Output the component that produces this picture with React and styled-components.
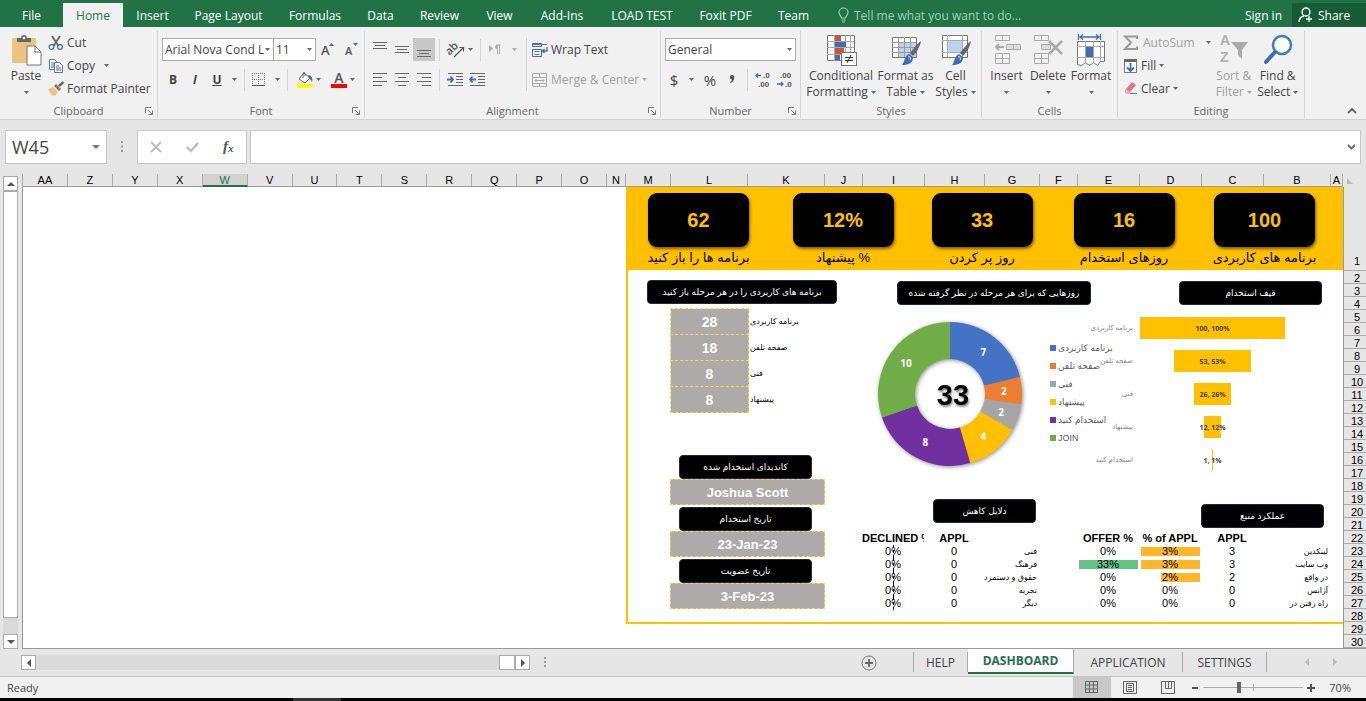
import React from "react";
import styled, { createGlobalStyle, css } from "styled-components";

const ui = `"Open Sans", "Noto Sans", sans-serif`;
const sheet = `"Liberation Sans", "DejaVu Sans", sans-serif`;
const amber = "#ffc000";

const GlobalStyle = createGlobalStyle`
  * {
    box-sizing: border-box;
  }
  body {
    margin: 0;
    font-family: ${ui};
    font-size: 12px;
    color: #444;
    background: #e6e6e6;
  }
  button, select, input {
    font: inherit;
    color: inherit;
    margin: 0;
    padding: 0;
    border: 0;
    background: none;
    border-radius: 0;
    outline: 0;
  }
  svg {
    display: block;
    flex: none;
    overflow: visible;
  }
`;

const Page = styled.div`
  min-height: 100vh;
  display: flex;
  flex-direction: column;
  overflow: hidden;
`;

/* ---------- tab bar ---------- */

const TabBar = styled.nav`
  height: 27px;
  flex: none;
  display: flex;
  padding-top: 3px;
  background: #217346;
  color: #fff;
  white-space: nowrap;
`;
const RibbonTab = styled.button`
  width: ${(p) => p.$width}px;
  height: 24px;
  text-align: center;
  ${(p) =>
    p.$active &&
    css`
      background: #f1f1f1;
      color: #217346;
    `}
`;
const TellMe = styled.label`
  display: flex;
  align-items: center;
  gap: 5px;
  flex: 1;
  padding-left: 16px;
  color: #a5cdb6;
  input {
    width: 180px;
  }
  input::placeholder {
    color: #a5cdb6;
    opacity: 1;
  }
`;
const ShareButton = styled.button`
  width: 74px;
  height: 24px;
  display: flex;
  align-items: center;
  gap: 4px;
  padding-left: 6px;
  background: #185c37;
`;

/* ---------- ribbon ---------- */

const RibbonBar = styled.div`
  height: 93px;
  flex: none;
  display: flex;
  padding: 4px 0 1px;
  background: #f1f1f1;
  border-bottom: 1px solid #d2d2d2;
  white-space: nowrap;
`;
const Group = styled.section`
  width: ${(p) => p.$width}px;
  display: flex;
  flex-direction: column;
  border-right: 1px solid #d4d4d4;
`;
const GroupBody = styled.div`
  display: flex;
  flex: 1;
  padding: 0 4px;
`;
const GroupFooter = styled.div`
  height: 14px;
  display: grid;
  grid-template-columns: 12px 1fr 12px;
  align-items: center;
  text-align: center;
  color: #666;
  font-size: 11px;
  line-height: 14px;
`;
const BigButton = styled.button`
  width: ${(p) => p.$width}px;
  height: 70px;
  display: flex;
  flex-direction: column;
  align-items: center;
  padding-top: 3px;
  color: ${(p) => (p.$off ? "#a0a0a0" : "#444")};
  line-height: 16px;
  svg {
    margin-bottom: 2px;
  }
`;
const LabelLine = styled.span`
  height: 16px;
  display: flex;
  align-items: center;
  gap: 3px;
  svg {
    margin: 0;
  }
`;
const Stack = styled.div`
  display: flex;
  flex-direction: column;
`;
const SmallButton = styled.button`
  height: 23px;
  display: flex;
  align-items: center;
  gap: ${(p) => p.$gap || 3}px;
  color: ${(p) => (p.$off ? "#a0a0a0" : "#444")};
`;
const ToolRows = styled.div`
  display: flex;
  flex-direction: column;
  gap: 7px;
  padding-top: 7px;
`;
const ToolRow = styled.div`
  height: 23px;
  display: flex;
  align-items: center;
`;
const Tool = styled.button`
  width: ${(p) => p.$width || 22}px;
  height: 23px;
  display: flex;
  align-items: center;
  justify-content: center;
  gap: 3px;
  font-weight: ${(p) => (p.$bold ? 700 : 400)};
  font-size: ${(p) => p.$size || 12}px;
  background: ${(p) => (p.$active ? "#c8c8c8" : "none")};
`;
const Divider = styled.span`
  width: 1px;
  height: ${(p) => p.$height || 22}px;
  margin: 0 ${(p) => (p.$gap === undefined ? 4 : p.$gap)}px;
  background: #d4d4d4;
`;
const SelectFrame = styled.div`
  width: ${(p) => p.$width}px;
  height: 23px;
  display: grid;
  align-items: center;
  border: 1px solid #ababab;
  margin-right: -1px;
  background: #fff;
  select {
    grid-area: 1 / 1;
    width: 100%;
    padding: 0 6px 0 2px;
    appearance: none;
  }
  svg {
    grid-area: 1 / 1;
    justify-self: end;
    margin-right: 3px;
    pointer-events: none;
  }
`;
const RibbonEnd = styled.div`
  flex: 1;
  display: flex;
  align-items: flex-end;
  justify-content: flex-end;
  padding: 0 9px 3px 0;
`;

/* ---------- formula bar ---------- */

const FormulaRow = styled.div`
  height: 54px;
  flex: none;
  display: flex;
  align-items: center;
  padding: 0 5px;
`;
const Box = styled.div`
  height: 34px;
  display: flex;
  align-items: center;
  background: #fff;
  border: 1px solid #c6c6c6;
`;
const NameBox = styled(Box)`
  width: 102px;
  padding: 0 6px;
  input {
    width: 80px;
    font-size: 18px;
  }
`;
const FormulaTools = styled(Box)`
  width: 110px;
  justify-content: space-around;
  margin-right: 3px;
  button {
    width: 28px;
    display: flex;
    justify-content: center;
  }
`;
const FormulaBox = styled(Box)`
  flex: 1;
  padding-right: 4px;
  input {
    flex: 1;
    height: 30px;
    padding: 0 6px;
  }
`;
const Grip = styled.span`
  width: 30px;
  display: flex;
  justify-content: center;
`;

/* ---------- worksheet ---------- */

const Workbook = styled.main`
  flex: 1;
  display: grid;
  grid-template-columns: 22px 1fr;
`;
const VScroll = styled.div`
  display: flex;
  flex-direction: column;
  padding: 2px 4px 0 3px;
`;
const ScrollButton = styled.button`
  width: 15px;
  height: 15px;
  flex: none;
  display: flex;
  align-items: center;
  justify-content: center;
  background: #fff;
  border: 1px solid #ababab;
`;
const VThumb = styled.div`
  flex: 1;
  background: #fff;
  border: 1px solid #ababab;
`;
const VTrack = styled.div`
  height: 16px;
  background: #dadada;
`;
const Sheet = styled.div`
  display: flex;
  flex-direction: column;
`;
const ColumnHeads = styled.div`
  height: 13px;
  display: flex;
  font: 11px/13px ${sheet};
  color: #000;
  text-align: center;
  border-left: 1px solid #ababab;
`;
const ColumnHead = styled.div`
  ${(p) => (p.$width ? `width: ${p.$width}px; flex: none;` : "flex: 1;")}
  border-right: 1px solid #ababab;
  border-bottom: 1px solid #999;
  ${(p) =>
    p.$active &&
    css`
      background: #d2d2d2;
      color: #217346;
      border-bottom: 2px solid #217346;
    `}
`;
const Corner = styled.div`
  width: 23px;
  padding: 4px 0 0 4px;
`;
const SheetBody = styled.div`
  flex: 1;
  display: flex;
  background: #fff;
  border-left: 1px solid #999;
  border-bottom: 1px solid #999;
`;
const EmptyCells = styled.div`
  flex: 1;
`;
const RowHeads = styled.div`
  width: 23px;
  display: flex;
  flex-direction: column;
  background: #e6e6e6;
  border-left: 1px solid #999;
  font: 11px/10px ${sheet};
  color: #000;
`;
const RowHead = styled.div`
  ${(p) => (p.$tall ? "height: 84px; padding-bottom: 4px;" : "flex: 1;")}
  display: flex;
  align-items: flex-end;
  justify-content: center;
  padding-left: 4px;
  border-bottom: 1px solid #ababab;
`;

/* ---------- dashboard ---------- */

const Dashboard = styled.div`
  width: 717px;
  flex: none;
  color: #000;
  font-family: ${sheet};
`;
const KpiBand = styled.div`
  height: 83px;
  display: grid;
  grid-template-columns: 145px 144px 134px 150px 131px;
  justify-items: center;
  padding-top: 6px;
  background: ${amber};
`;
const Kpi = styled.div`
  display: flex;
  flex-direction: column;
  align-items: center;
  white-space: nowrap;
`;
const KpiValue = styled.div`
  width: 101px;
  height: 54px;
  display: flex;
  align-items: center;
  justify-content: center;
  border-radius: 9px;
  background: #000;
  color: ${amber};
  font-size: 20px;
  font-weight: 700;
  box-shadow: 1px 2px 3px rgba(0, 0, 0, 0.5);
`;
const KpiLabel = styled.div`
  height: 22px;
  font-size: 13px;
  line-height: 22px;
`;
const Board = styled.div`
  height: 354px;
  display: grid;
  grid-template-columns: 234px 1fr;
  border-left: 2px solid ${amber};
  border-bottom: 2px solid ${amber};
`;
const StageColumn = styled.div`
  padding: 10px 0 0 19px;
`;
const MainColumn = styled.div`
  display: grid;
  grid-template-rows: 229px 1fr;
`;
const ChartRow = styled.div`
  display: grid;
  grid-template-columns: 250px 1fr;
  padding-top: 11px;
`;
const TableRow = styled.div`
  display: grid;
  grid-template-columns: 215px 1fr;
`;
const Title = styled.h2`
  width: ${(p) => p.$width}px;
  height: 24px;
  margin: ${(p) => p.$top || 0}px 0 0 ${(p) => p.$left || 0}px;
  display: flex;
  align-items: center;
  justify-content: center;
  border: 1px solid #1b2a41;
  border-radius: 4px;
  background: #000;
  color: #fff;
  font-size: 9px;
  font-weight: 400;
  white-space: nowrap;
`;
const StageTable = styled.table`
  margin: 4px 0 42px 23px;
  border-collapse: collapse;
  td {
    width: 78px;
    height: 26px;
    padding: 0;
    text-align: center;
    border: 1px dashed #ffd54a;
    background: #aeaaaa;
    color: #fff;
    font-size: 14px;
    font-weight: 700;
  }
  th {
    padding: 0 1px;
    font-size: 8px;
    font-weight: 400;
    text-align: left;
    white-space: nowrap;
  }
`;
const Hire = styled.div`
  padding-left: 23px;
  margin-bottom: 2px;
`;
const HireValue = styled.div`
  width: 155px;
  height: 26px;
  display: flex;
  align-items: center;
  justify-content: center;
  border: 1px dashed #ffd54a;
  background: #aeaaaa;
  color: #fff;
  font-size: 13px;
  font-weight: 700;
`;
const DonutArea = styled.div`
  display: flex;
  padding: 9px 0 0 8px;
`;
const Legend = styled.ul`
  list-style: none;
  margin: 25px 0 0 20px;
  padding: 0;
`;
const LegendItem = styled.li`
  height: 18px;
  display: flex;
  align-items: center;
  gap: 2px;
  font-size: 9px;
  color: #595959;
  white-space: nowrap;
  &::before {
    content: "";
    width: 6px;
    height: 6px;
    background: ${(p) => p.$color};
  }
`;
const Funnel = styled.div`
  display: flex;
  flex-direction: column;
  gap: 11px;
  padding-top: 12px;
`;
const FunnelRow = styled.div`
  height: 22px;
  display: grid;
  grid-template-columns: 21px 145px;
  gap: 7px;
  align-items: center;
  justify-items: center;
`;
const FunnelLabel = styled.span`
  justify-self: stretch;
  display: flex;
  justify-content: flex-end;
  font-size: 7px;
  color: #7f7f7f;
  white-space: nowrap;
`;
const FunnelBar = styled.div`
  height: 22px;
  display: flex;
  align-items: center;
  justify-content: center;
  background: ${amber};
  color: #404040;
  font: 700 7px ${ui};
  white-space: nowrap;
`;
const DataTable = styled.table`
  table-layout: fixed;
  width: ${(p) => p.$width}px;
  margin-top: ${(p) => p.$top}px;
  border-collapse: collapse;
  font-size: 11px;
  line-height: 13px;
  th,
  td {
    height: 13px;
    padding: 0;
    text-align: center;
    white-space: nowrap;
    overflow: hidden;
  }
  thead th {
    height: 14px;
  }
  tbody th {
    padding-right: 2px;
    text-align: right;
    font-size: 8px;
    font-weight: 400;
  }
`;
const BarCell = styled.td`
  background: linear-gradient(${(p) => p.$color}, ${(p) => p.$color}) right 1px
    center / ${(p) => p.$bar}px 9px no-repeat;
`;
const AxisCell = styled.td`
  background: repeating-linear-gradient(#000 0 3px, transparent 3px 5px) center /
    1px 100% no-repeat;
`;

/* ---------- bottom ---------- */

const TabStrip = styled.div`
  height: 28px;
  flex: none;
  display: flex;
  padding-left: 21px;
  border-bottom: 1px solid #c6c6c6;
`;
const HScroll = styled.div`
  height: 15px;
  flex: 1;
  display: flex;
  margin-top: 6px;
  background: #dadada;
  justify-content: space-between;
`;
const HEnd = styled.div`
  display: flex;
`;
const HThumb = styled.div`
  width: 16px;
  background: #fff;
  border: 1px solid #ababab;
`;
const SheetTabs = styled.div`
  width: 836px;
  display: flex;
  align-items: flex-start;
`;
const AddSheet = styled.button`
  width: 88px;
  height: 27px;
  margin-left: 265px;
  display: flex;
  align-items: center;
  justify-content: center;
`;
const SheetTab = styled.button`
  width: ${(p) => p.$width}px;
  height: ${(p) => (p.$active ? 25 : 20)}px;
  margin-top: ${(p) => (p.$active ? 0 : 3)}px;
  border-right: 1px solid #ababab;
  &:first-of-type + & {
    border-left: 1px solid #ababab;
  }
  ${(p) => p.$first && "border-left: 1px solid #ababab;"}
  ${(p) =>
    p.$active &&
    css`
      background: #fff;
      color: #217346;
      font-weight: 700;
      border-bottom: 2px solid #217346;
    `}
`;
const TabArrows = styled.div`
  flex: 1;
  height: 26px;
  display: flex;
  align-items: center;
  justify-content: flex-end;
  gap: 20px;
  padding-right: 27px;
`;
const StatusBar = styled.footer`
  height: 21px;
  flex: none;
  display: flex;
  align-items: center;
  padding: 0 15px 0 7px;
  background: #f1f1f1;
`;
const Ready = styled.span`
  flex: 1;
  font-size: 11px;
`;
const ViewButton = styled.button`
  width: 38px;
  height: 21px;
  display: flex;
  align-items: center;
  justify-content: center;
  background: ${(p) => (p.$active ? "#c8c8c8" : "none")};
`;
const ZoomButton = styled.button`
  width: 16px;
  height: 20px;
  display: flex;
  align-items: center;
  justify-content: center;
`;
const ZoomSlider = styled.input`
  width: 100px;
  height: 11px;
  appearance: none;
  background: linear-gradient(#ababab, #ababab) center / 100% 1px no-repeat,
    linear-gradient(#ababab, #ababab) center / 1px 7px no-repeat;
  &::-webkit-slider-thumb {
    appearance: none;
    width: 4px;
    height: 11px;
    background: #666;
  }
`;
const ZoomValue = styled.span`
  width: 32px;
  text-align: right;
  font-size: 11px;
`;
const Taskbar = styled.div`
  height: 3px;
  flex: none;
  background: linear-gradient(#333, #333) 293px 0 / 48px 3px no-repeat #000;
`;

/* ---------- icons ---------- */

const Svg = ({ w = 16, h = 16, children, ...rest }) => (
  <svg width={w} height={h} viewBox={`0 0 ${w} ${h}`} fill="none" aria-hidden="true" {...rest}>
    {children}
  </svg>
);
const Caret = ({ color = "#666" }) => (
  <Svg w={5} h={3}>
    <path d="M0 0h5L2.5 3z" fill={color} />
  </Svg>
);
const Arrow = ({ dir, color = "#555" }) => {
  const d = {
    up: "M0 6h8L4 2z",
    down: "M0 2h8L4 6z",
    left: "M6 0v8L2 4z",
    right: "M2 0v8l4-4z",
  };
  return (
    <Svg w={8} h={8}>
      <path d={d[dir]} fill={color} />
    </Svg>
  );
};
const Dots = () => (
  <Svg w={2} h={12}>
    <path d="M0 1h2M0 5.500h2M0 10h2" stroke="#999" strokeWidth="2" />
  </Svg>
);
const Launcher = () => (
  <Svg w={8} h={8}>
    <path d="M.5 6V.5H6M3 3l4 4M7.500 3.500v4h-4" stroke="#777" />
  </Svg>
);
const Lines = ({ rows, color = "#666" }) => (
  <Svg w={14} h={15}>
    {rows.map(([x, y, w]) => (
      <path key={y} d={`M${x} ${y + 0.5}h${w}`} stroke={color} />
    ))}
  </Svg>
);

const PasteIcon = () => (
  <Svg w={32} h={32}>
    <rect x="2" y="4" width="24" height="25" rx="1" fill="#ecc47e" />
    <path d="M7 8V4h4c0-4 6-4 6 0h4v4z" fill="#666" />
    <circle cx="14" cy="4" r="1.300" fill="#f1f1f1" />
    <path d="M17 12h8l6 6v13H17z" fill="#fff" stroke="#777" />
    <path d="M25 12v6h6" stroke="#777" />
  </Svg>
);
const CutIcon = () => (
  <Svg>
    <path d="M4 1l6.500 10M12 1L5.500 11" stroke="#666" strokeWidth="1.800" />
    <circle cx="3.500" cy="12" r="2.400" stroke="#3e6db5" strokeWidth="1.200" />
    <circle cx="12" cy="12" r="2.400" stroke="#3e6db5" strokeWidth="1.200" />
  </Svg>
);
const CopyIcon = () => (
  <Svg>
    <path d="M1.500 1.500h5l2 2v8h-7z" fill="#fff" stroke="#5b7394" />
    <path d="M3 5h3M3 7h3M3 9h3" stroke="#3e6db5" />
    <path d="M6.500 4.500h5l3 3v7h-8z" fill="#fff" stroke="#5b7394" />
    <path d="M8 8h3M8 10h5M8 12h5" stroke="#3e6db5" />
  </Svg>
);
const PainterIcon = () => (
  <Svg>
    <path d="M15 0l1 2-4 4-2-2z" fill="#666" />
    <path d="M8 3l5 5-2 2-5-5z" fill="#777" />
    <path d="M5 6l5 5-3 4-2-1-1 1-3-5-1-2z" fill="#ecc47e" />
  </Svg>
);
const FontSizeIcon = ({ down }) => (
  <Svg w={15} h={16}>
    <text x="0" y="13" fontSize={down ? 11 : 13} fontWeight="600" fill="#555" fontFamily="Open Sans">
      A
    </text>
    <path d={down ? "M8 1h5l-2.500 3z" : "M8 4h5l-2.500-3z"} fill="#3e6db5" />
  </Svg>
);
const BorderIcon = () => (
  <Svg w={14} h={14}>
    <path d="M.5 0v13M6.500 0v13M12.500 0v13M0 .5h13M0 6.500h13" stroke="#777" strokeDasharray="1 1" />
    <path d="M0 12.500h13" stroke="#555" />
  </Svg>
);
const BucketIcon = () => (
  <Svg w={16} h={16}>
    <path d="M7 1l6 5-5 5-6-4z" fill="#fff" stroke="#666" />
    <path d="M6 6V1.500C6 0 8 0 8 1.500V4" stroke="#666" />
    <path d="M11 3c4 0 5 4 4 7-1-2-2-3-3-4z" fill="#3e6db5" />
    <path d="M0 12h16v4H0z" fill="#ff0" />
  </Svg>
);
const FontColorIcon = () => (
  <Svg w={16} h={16}>
    <text x="8" y="11" textAnchor="middle" fontSize="14" fontWeight="600" fill="#555" fontFamily="Open Sans">
      A
    </text>
    <path d="M0 12h16v4H0z" fill="#f00" />
  </Svg>
);
const OrientIcon = () => (
  <Svg w={17} h={16}>
    <text transform="translate(3 11) rotate(-45)" x="-3" y="1" fontSize="11" fontWeight="600" fill="#555" fontFamily="Open Sans">
      ab
    </text>
    <path d="M6 15L15.500 5.500M11.500 5.500h4v4" stroke="#555" strokeWidth="1.200" />
  </Svg>
);
const RtlIcon = () => (
  <Svg w={13} h={11}>
    <path d="M0 1v7l4-3.500z" fill="#aaa" />
    <path d="M8 1a2 2 0 000 4z" fill="#aaa" />
    <path d="M7 1h5M8.500 1v9M10.500 1v9" stroke="#aaa" />
  </Svg>
);
const IndentIcon = ({ out }) => (
  <Svg w={16} h={14}>
    <path d="M1 .5h15M9 3.500h7M9 6.500h7M9 9.500h7M1 12.500h15" stroke="#666" />
    <path
      d={out ? "M7 6.500H1M3.500 3.500L1 6.500l2.500 3" : "M0 6.500h6M3.500 3.500L6 6.500l-2.500 3"}
      stroke="#3e6db5"
      strokeWidth="1.800"
    />
  </Svg>
);
const WrapIcon = () => (
  <Svg w={16} h={16}>
    <path d="M.5 1.500h9v3h-9zM.5 7.500h9v7h-9z" stroke="#3e6db5" />
    <path d="M1 2.500h14M2.500 9.500h5M2.500 12.500h5" stroke="#5b7394" />
    <path d="M15 5v4h-4M12.500 7L10.500 9l2 2" stroke="#3e6db5" strokeWidth="1.300" />
  </Svg>
);
const MergeIcon = () => (
  <Svg w={16} h={16}>
    <path d="M.5 1.500h14v13H.5zM.5 5.500h14M.5 11.500h14M7.500 1.500v4M7.500 11.500v3" stroke="#aaa" />
    <path d="M3 8.500h9M4.500 7L3 8.500 4.500 10M10.500 7L12 8.500 10.500 10" stroke="#aaa" />
  </Svg>
);
const CommaIcon = () => (
  <Svg w={6} h={10}>
    <path d="M3 0a2.300 2.300 0 012.300 2.500C5.300 5 4 7 1.500 8L1 7c1.200-.8 1.800-1.600 2-2.500A2.200 2.200 0 013 0z" fill="#555" />
  </Svg>
);
const DecimalIcon = ({ less }) => (
  <Svg w={16} h={16}>
    <g fontSize="8" fontWeight="600" fill="#555" fontFamily="Liberation Sans">
      <text x={less ? 3 : 8} y="6">
        {less ? ".00" : ".0"}
      </text>
      <text x={less ? 8 : 3} y="15">
        {less ? ".0" : ".00"}
      </text>
    </g>
    <path
      d={less ? "M0 12h6M4 10l2 2-2 2" : "M6 3.500H1M3 1.500l-2 2 2 2"}
      stroke="#3e6db5"
      strokeWidth="1.300"
    />
  </Svg>
);
const CondIcon = () => (
  <Svg w={32} h={32}>
    <path d="M2.500 1.500h27v25h-27z" fill="#fff" stroke="#777" />
    <path d="M9.500 1v26M20.500 1v26M25.500 1v26M2 7.500h27M2 13.500h27M2 20.500h27" stroke="#aaa" />
    <path d="M10 2h6v5h-6zM10 14h9v6h-9z" fill="#d35230" />
    <path d="M10 8h11v5H10zM10 21h5v5h-5z" fill="#3e6db5" />
    <rect x="16.500" y="18.500" width="15" height="13" fill="#fff" stroke="#777" />
    <path d="M20 23.500h8M20 26.500h8M26 21l-4 8" stroke="#333" />
  </Svg>
);
const Brush = () => (
  <>
    <path d="M31 7c-1 6-5 12-8 15l-3-3C23 15 27 10 31 7z" fill="#666" />
    <path d="M19 20l4 3c0 6-4 8-11 8 3-3 2-9 7-11z" fill="#3e6db5" />
    <path d="M18 23c2-1 3 1 2 3" stroke="#fff" />
  </>
);
const TableIcon = () => (
  <Svg w={32} h={32}>
    <path d="M2.500 3.500h24v20h-24z" fill="#fff" stroke="#777" />
    <path d="M8 9h18v14H8z" fill="#bcd3ea" />
    <path d="M8.500 3v20M14.500 3v20M20.500 3v20M2 8.500h24M2 13.500h24M2 18.500h24" stroke="#9a9a9a" />
    <Brush />
  </Svg>
);
const StylesIcon = () => (
  <Svg w={32} h={32}>
    <path d="M2.500 1.500h25v22h-25z" fill="#fff" stroke="#777" />
    <path d="M7.500 1v22M22.500 1v22M2 6.500h25M2 18.500h25" stroke="#aaa" />
    <path d="M8 7h14v11H8z" fill="#bcd3ea" />
    <Brush />
  </Svg>
);
const InsertIcon = () => (
  <Svg w={32} h={32}>
    <g stroke="#aaa">
      <path d="M4.500 1.500h14v5h-14zM11.500 1.500v5M4.500 19.500h14v10h-14zM11.500 19.500v10M4.500 24.500h14" />
      <path d="M15.500 10.500h14v5h-14zM22.500 10.500v5" fill="#ddd" />
      <path d="M13 13H5M8 10l-3 3 3 3" strokeWidth="1.800" />
    </g>
  </Svg>
);
const DeleteIcon = () => (
  <Svg w={32} h={32}>
    <g stroke="#aaa">
      <path d="M2.500 1.500h14v5h-14zM9.500 1.500v5M2.500 19.500h14v10h-14zM9.500 19.500v10M2.500 24.500h14" />
      <path d="M9.500 10.500h9v5h-9z" fill="#ddd" />
      <path d="M17 7l13 13M30 7L17 20" strokeWidth="2.500" />
    </g>
  </Svg>
);
const FormatIcon = () => (
  <Svg w={32} h={32}>
    <path d="M3.500 0v6M25.500 0v6M5 3h19M8 .5L5 3l3 2.500M21 .5L24 3l-3 2.500" stroke="#3e6db5" strokeWidth="1.300" />
    <path d="M2.500 7.500h27v20h-4l-3 4-4-3-4 3-4-3-4 3-4-1z" fill="#fff" stroke="#777" />
    <path d="M10.500 7v21M18.500 7v21M25.500 7v21M2 12.500h27M2 23.500h27" stroke="#aaa" />
    <path d="M11 13h7v10h-7z" fill="#3e6db5" />
  </Svg>
);
const SigmaIcon = () => (
  <Svg w={16} h={16}>
    <path d="M15 4V1.500H3L9 7.500l-6 6.500h12V11.500" stroke="#999" strokeWidth="2" />
  </Svg>
);
const FillIcon = () => (
  <Svg w={16} h={16}>
    <path d="M2.500 1.500h12v13h-12z" fill="#fff" stroke="#777" />
    <path d="M2 1h13v3H2z" fill="#666" />
    <path d="M8.500 5v8M5 9.500L8.500 13 12 9.500" stroke="#3e6db5" strokeWidth="1.800" />
  </Svg>
);
const ClearIcon = () => (
  <Svg w={16} h={16}>
    <path d="M10 1l4 3-6 7-4-3z" fill="#e8718d" />
    <path d="M4 8l4 3-1.500 1.500H5L3 11z" fill="#f4b3c2" stroke="#e8718d" strokeWidth=".5" />
    <path d="M8 12.500h7" stroke="#777" />
  </Svg>
);
const SortIcon = () => (
  <Svg w={32} h={32}>
    <g fontSize="14" fontWeight="600" fill="#b0b0b0" fontFamily="Liberation Sans">
      <text x="2" y="11">A</text>
      <text x="2" y="28">Z</text>
    </g>
    <path d="M13 8h17l-6 8v9l-4-4v-5z" fill="#aaa" />
  </Svg>
);
const FindIcon = () => (
  <Svg w={32} h={32}>
    <circle cx="20" cy="11" r="9" fill="#fff" stroke="#3e7cbf" strokeWidth="2.500" />
    <path d="M13 18L4 28" stroke="#3e6db5" strokeWidth="4" strokeLinecap="round" />
  </Svg>
);
const BulbIcon = () => (
  <Svg w={11} h={15}>
    <path d="M3.500 10c0-2-2.500-3-2.500-5.500a4.500 4.500 0 019 0C10 7 7.500 8 7.500 10zM3.500 12h4M4 14h3" stroke="#a5cdb6" strokeWidth="1.200" />
  </Svg>
);
const PersonIcon = () => (
  <Svg w={16} h={16}>
    <circle cx="8" cy="5" r="4" stroke="#fff" strokeWidth="1.300" />
    <path d="M1 15c0-3 1-5 5-6M11 9v6M8 12h6" stroke="#fff" strokeWidth="1.300" />
  </Svg>
);

/* ---------- data ---------- */

const ribbonTabs = [
  ["File", 63],
  ["Home", 60, true],
  ["Insert", 59],
  ["Page Layout", 93],
  ["Formulas", 80],
  ["Data", 51],
  ["Review", 67],
  ["View", 53],
  ["Add-Ins", 72],
  ["LOAD TEST", 88],
  ["Foxit PDF", 79],
  ["Team", 57],
];

const freeColumns = ["AA", "Z", "Y", "X", "W", "V", "U", "T", "S", "R", "Q", "P", "O"];
const sizedColumns = [
  ["N", 19],
  ["M", 45],
  ["L", 77],
  ["K", 77],
  ["J", 38],
  ["I", 62],
  ["H", 60],
  ["G", 55],
  ["F", 38],
  ["E", 62],
  ["D", 62],
  ["C", 62],
  ["B", 67],
  ["A", 12],
];

const kpis = [
  ["62", "برنامه ها را باز کنید"],
  ["12%", "% پیشنهاد"],
  ["33", "روز پر کردن"],
  ["16", "روزهای استخدام"],
  ["100", "برنامه های کاربردی"],
];

const stages = [
  ["28", "برنامه کاربردی"],
  ["18", "صفحه تلفن"],
  ["8", "فنی"],
  ["8", "پیشنهاد"],
];

const hires = [
  ["کاندیدای استخدام شده", "Joshua Scott"],
  ["تاریخ استخدام", "23-Jan-23"],
  ["تاریخ عضویت", "3-Feb-23"],
];

const days = [
  ["برنامه کاربردی", 7, "#4472c4"],
  ["صفحه تلفن", 2, "#ed7d31"],
  ["فنی", 2, "#a5a5a5"],
  ["پیشنهاد", 4, "#ffc000"],
  ["استخدام کنید", 8, "#7030a0"],
  ["JOIN", 10, "#70ad47"],
];

const funnel = [
  ["برنامه کاربردی", 100],
  ["صفحه تلفن", 53],
  ["فنی", 26],
  ["پیشنهاد", 12],
  ["استخدام کنید", 1],
];

const declineReasons = ["فنی", "فرهنگ", "حقوق و دستمزد", "تجربه", "دیگر"];

const sources = [
  { name: "لینکدین", appl: 3, share: 3, offer: 0 },
  { name: "وب سایت", appl: 3, share: 3, offer: 33 },
  { name: "در واقع", appl: 2, share: 2, offer: 0 },
  { name: "آژانس", appl: 0, share: 0, offer: 0 },
  { name: "راه رفتن در", appl: 0, share: 0, offer: 0 },
];

/* ---------- sections ---------- */

const RibbonGroup = ({ name, width, launcher, children }) => (
  <Group $width={width}>
    <GroupBody>{children}</GroupBody>
    <GroupFooter>
      <span />
      <span>{name}</span>
      {launcher && <Launcher />}
    </GroupFooter>
  </Group>
);

const Big = ({ icon, lines, width, off }) => (
  <BigButton $width={width} $off={off}>
    {icon}
    <LabelLine>{lines[0]}</LabelLine>
    <LabelLine>
      {lines[1]}
      <Caret color={off ? "#aaa" : "#666"} />
    </LabelLine>
  </BigButton>
);

const Ribbon = () => (
  <RibbonBar>
    <RibbonGroup name="Clipboard" width={158} launcher>
      <Big icon={<PasteIcon />} lines={["Paste"]} width={44} />
      <Stack>
        <SmallButton>
          <CutIcon /> Cut
        </SmallButton>
        <SmallButton>
          <CopyIcon /> Copy &nbsp;
          <Caret />
        </SmallButton>
        <SmallButton>
          <PainterIcon /> Format Painter
        </SmallButton>
      </Stack>
    </RibbonGroup>
    <RibbonGroup name="Font" width={207} launcher>
      <ToolRows>
        <ToolRow>
          <SelectFrame $width={112}>
            <select aria-label="Font">
              <option>Arial Nova Cond L</option>
            </select>
            <Caret />
          </SelectFrame>
          <SelectFrame $width={43}>
            <select aria-label="Font size">
              <option>11</option>
            </select>
            <Caret />
          </SelectFrame>
          <Tool $width={26} aria-label="Increase font size">
            <FontSizeIcon />
          </Tool>
          <Tool aria-label="Decrease font size">
            <FontSizeIcon down />
          </Tool>
        </ToolRow>
        <ToolRow>
          <Tool $bold>B</Tool>
          <Tool $bold>
            <i>I</i>
          </Tool>
          <Tool $bold>
            <u>U</u>
          </Tool>
          <Tool $width={12} aria-label="Underline style">
            <Caret />
          </Tool>
          <Divider />
          <Tool $width={34} aria-label="Borders">
            <BorderIcon />
            &nbsp;
            <Caret />
          </Tool>
          <Divider />
          <Tool $width={34} aria-label="Fill color">
            <BucketIcon />
            <Caret />
          </Tool>
          <Tool $width={33} aria-label="Font color">
            <FontColorIcon />
            <Caret />
          </Tool>
        </ToolRow>
      </ToolRows>
    </RibbonGroup>
    <RibbonGroup name="Alignment" width={296} launcher>
      <ToolRows>
        <ToolRow>
          <Tool aria-label="Top align">
            <Lines rows={[[0, 0, 14], [2, 3, 10], [0, 6, 14]]} />
          </Tool>
          <Tool aria-label="Middle align">
            <Lines rows={[[0, 4, 14], [2, 7, 10], [0, 10, 14]]} />
          </Tool>
          <Tool $active aria-label="Bottom align">
            <Lines rows={[[0, 8, 14], [2, 11, 10], [0, 14, 14]]} />
          </Tool>
          <Divider />
          <Tool $width={32} aria-label="Orientation">
            <OrientIcon />
            <Caret />
          </Tool>
          <Divider />
          <Tool $width={36} aria-label="Text direction">
            <RtlIcon />
            &nbsp;
            <Caret color="#aaa" />
          </Tool>
        </ToolRow>
        <ToolRow>
          <Tool aria-label="Align left">
            <Lines rows={[[0, 1, 14], [0, 5, 9], [0, 9, 14], [0, 13, 9]]} />
          </Tool>
          <Tool aria-label="Center">
            <Lines rows={[[0, 1, 14], [3, 5, 8], [0, 9, 14], [3, 13, 8]]} />
          </Tool>
          <Tool aria-label="Align right">
            <Lines rows={[[0, 1, 14], [5, 5, 9], [0, 9, 14], [5, 13, 9]]} />
          </Tool>
          <Divider />
          <Tool aria-label="Increase indent">
            <IndentIcon />
          </Tool>
          <Tool aria-label="Decrease indent">
            <IndentIcon out />
          </Tool>
        </ToolRow>
      </ToolRows>
      <ToolRows>
        <Divider $height={53} $gap={5} />
      </ToolRows>
      <ToolRows>
        <SmallButton>
          <WrapIcon /> Wrap Text
        </SmallButton>
        <SmallButton $off>
          <MergeIcon /> Merge &amp; Center
          <Caret color="#aaa" />
        </SmallButton>
      </ToolRows>
    </RibbonGroup>
    <RibbonGroup name="Number" width={140} launcher>
      <ToolRows>
        <ToolRow>
          <SelectFrame $width={131}>
            <select aria-label="Number format">
              <option>General</option>
            </select>
            <Caret />
          </SelectFrame>
        </ToolRow>
        <ToolRow>
          <Tool $width={34} $size={15}>
            $ &nbsp;
            <Caret />
          </Tool>
          <Tool $size={15}>%</Tool>
          <Tool aria-label="Comma style">
            <CommaIcon />
          </Tool>
          <Divider />
          <Tool aria-label="Increase decimal">
            <DecimalIcon />
          </Tool>
          <Tool aria-label="Decrease decimal">
            <DecimalIcon less />
          </Tool>
        </ToolRow>
      </ToolRows>
    </RibbonGroup>
    <RibbonGroup name="Styles" width={181}>
      <Big icon={<CondIcon />} lines={["Conditional", "Formatting"]} width={72} />
      <Big icon={<TableIcon />} lines={["Format as", "Table"]} width={57} />
      <Big icon={<StylesIcon />} lines={["Cell", "Styles"]} width={43} />
    </RibbonGroup>
    <RibbonGroup name="Cells" width={136}>
      <Big icon={<InsertIcon />} lines={["Insert"]} width={41} />
      <Big icon={<DeleteIcon />} lines={["Delete"]} width={42} />
      <Big icon={<FormatIcon />} lines={["Format"]} width={44} />
    </RibbonGroup>
    <RibbonGroup name="Editing" width={187}>
      <Stack>
        <SmallButton $off $gap={5}>
          <SigmaIcon /> AutoSum &nbsp;
          <Caret />
        </SmallButton>
        <SmallButton>
          <FillIcon /> Fill
          <Caret />
        </SmallButton>
        <SmallButton>
          <ClearIcon /> Clear
          <Caret />
        </SmallButton>
      </Stack>
      <Big off icon={<SortIcon />} lines={["Sort &", "Filter"]} width={46} />
      <Big icon={<FindIcon />} lines={["Find &", "Select"]} width={42} />
    </RibbonGroup>
    <RibbonEnd>
      <Svg w={10} h={8}>
        <path d="M1 6l4-4 4 4" stroke="#666" strokeWidth="1.800" />
      </Svg>
    </RibbonEnd>
  </RibbonBar>
);

const FormulaBar = () => (
  <FormulaRow>
    <NameBox>
      <input aria-label="Name box" defaultValue="W45" />
      <Arrow dir="down" color="#777" />
    </NameBox>
    <Grip>
      <Dots />
    </Grip>
    <FormulaTools>
      <button aria-label="Cancel">
        <Svg w={12} h={12}>
          <path d="M1 1l10 10M11 1L1 11" stroke="#bbb" strokeWidth="1.800" />
        </Svg>
      </button>
      <button aria-label="Enter">
        <Svg w={13} h={12}>
          <path d="M1 6l4 4 7-8" stroke="#bbb" strokeWidth="2.200" />
        </Svg>
      </button>
      <button aria-label="Insert function">
        <Svg w={14} h={16}>
          <g fontFamily="Liberation Serif" fontStyle="italic" fontWeight="700" fill="#555">
            <text x="2" y="12" fontSize="15">f</text>
            <text x="7" y="13" fontSize="11">x</text>
          </g>
        </Svg>
      </button>
    </FormulaTools>
    <FormulaBox>
      <input aria-label="Formula" />
      <Svg w={9} h={8}>
        <path d="M1 2l3.500 3.500L8 2" stroke="#666" strokeWidth="1.800" />
      </Svg>
    </FormulaBox>
  </FormulaRow>
);

const point = (r, turn) => {
  const a = turn * 2 * Math.PI;
  return `${80 + r * Math.sin(a)} ${80 - r * Math.cos(a)}`;
};

const Donut = () => {
  const total = days.reduce((sum, d) => sum + d[1], 0);
  let from = 0;
  const slices = days.map(([name, value, color]) => {
    const start = from / total;
    from += value;
    const end = from / total;
    const [x, y] = point(54, (start + end) / 2).split(" ");
    return { name, value, color, start, end, x, y };
  });
  return (
    <svg width="160" height="160" viewBox="0 0 160 160" role="img" aria-label="33">
      <g style={{ filter: "drop-shadow(1px 1px 2px rgba(0, 0, 0, .45))" }}>
        {slices.map((s) => (
          <path
            key={s.color}
            fill={s.color}
            d={`M${point(72, s.start)}A72 72 0 0 1 ${point(72, s.end)}L${point(35, s.end)}A35 35 0 0 0 ${point(35, s.start)}z`}
          />
        ))}
      </g>
      <g fill="#fff" fontFamily="Open Sans" fontSize="10" fontWeight="700" textAnchor="middle">
        {slices.map((s) => (
          <text key={s.color} x={s.x} y={Number(s.y) + 4}>
            {s.value}
          </text>
        ))}
      </g>
      <text
        x="83"
        y="91"
        textAnchor="middle"
        fontFamily="Liberation Sans"
        fontSize="29"
        fontWeight="700"
        style={{ filter: "drop-shadow(1px 2px 1px rgba(0, 0, 0, .45))" }}
      >
        33
      </text>
    </svg>
  );
};

const DashboardSheet = () => (
  <Dashboard>
    <KpiBand>
      {kpis.map(([value, label]) => (
        <Kpi key={value}>
          <KpiValue>{value}</KpiValue>
          <KpiLabel dir="rtl">{label}</KpiLabel>
        </Kpi>
      ))}
    </KpiBand>
    <Board>
      <StageColumn>
        <Title $width={190}>برنامه های کاربردی را در هر مرحله باز کنید</Title>
        <StageTable>
          <tbody>
            {stages.map(([value, label]) => (
              <tr key={label}>
                <td>{value}</td>
                <th scope="row">{label}</th>
              </tr>
            ))}
          </tbody>
        </StageTable>
        {hires.map(([label, value]) => (
          <Hire key={label}>
            <Title $width={133} $left={9}>
              {label}
            </Title>
            <HireValue>{value}</HireValue>
          </Hire>
        ))}
      </StageColumn>
      <MainColumn>
        <ChartRow>
          <div>
            <Title $width={194} $left={35}>
              روزهایی که برای هر مرحله در نظر گرفته شده
            </Title>
            <DonutArea>
              <Donut />
              <Legend>
                {days.map(([name, , color]) => (
                  <LegendItem key={color} $color={color}>
                    {name}
                  </LegendItem>
                ))}
              </Legend>
            </DonutArea>
          </div>
          <div>
            <Title $width={143} $left={67}>
              قیف استخدام
            </Title>
            <Funnel>
              {funnel.map(([name, value]) => (
                <FunnelRow key={name}>
                  <FunnelLabel>{name}</FunnelLabel>
                  <FunnelBar style={{ width: `${value}%` }}>
                    {value}, {value}%
                  </FunnelBar>
                </FunnelRow>
              ))}
            </Funnel>
          </div>
        </ChartRow>
        <TableRow>
          <div>
            <Title $width={103} $left={71}>
              دلایل کاهش
            </Title>
            <DataTable $width={177} $top={8}>
              <colgroup>
                <col width="62" />
                <col width="60" />
                <col width="55" />
              </colgroup>
              <thead>
                <tr>
                  <th>DECLINED %</th>
                  <th>APPL</th>
                  <th />
                </tr>
              </thead>
              <tbody>
                {declineReasons.map((name) => (
                  <tr key={name}>
                    <AxisCell>0%</AxisCell>
                    <td>0</td>
                    <th scope="row">{name}</th>
                  </tr>
                ))}
              </tbody>
            </DataTable>
          </div>
          <div>
            <Title $width={123} $left={124} $top={5}>
              عملکرد منبع
            </Title>
            <DataTable $width={253} $top={3}>
              <colgroup>
                <col width="62" />
                <col width="62" />
                <col width="62" />
                <col width="67" />
              </colgroup>
              <thead>
                <tr>
                  <th>OFFER %</th>
                  <th>% of APPL</th>
                  <th>APPL</th>
                  <th />
                </tr>
              </thead>
              <tbody>
                {sources.map((s) => (
                  <tr key={s.name}>
                    <BarCell $color="#63c384" $bar={s.offer ? 59 : 0}>
                      {s.offer}%
                    </BarCell>
                    <BarCell $color="#ffb628" $bar={Math.round((s.share * 59) / 3)}>
                      {s.share}%
                    </BarCell>
                    <td>{s.appl}</td>
                    <th scope="row">{s.name}</th>
                  </tr>
                ))}
              </tbody>
            </DataTable>
          </div>
        </TableRow>
      </MainColumn>
    </Board>
  </Dashboard>
);

const App = () => (
  <>
    <GlobalStyle />
    <Page>
      <TabBar>
        {ribbonTabs.map(([name, width, active]) => (
          <RibbonTab key={name} $width={width} $active={active}>
            {name}
          </RibbonTab>
        ))}
        <TellMe>
          <BulbIcon />
          <input aria-label="Tell me" placeholder="Tell me what you want to do..." />
        </TellMe>
        <RibbonTab $width={57}>Sign in</RibbonTab>
        <ShareButton>
          <PersonIcon /> Share
        </ShareButton>
      </TabBar>
      <Ribbon />
      <FormulaBar />
      <Workbook>
        <VScroll>
          <ScrollButton aria-label="Scroll up">
            <Arrow dir="up" />
          </ScrollButton>
          <VThumb />
          <VTrack />
          <ScrollButton aria-label="Scroll down">
            <Arrow dir="down" />
          </ScrollButton>
        </VScroll>
        <Sheet>
          <ColumnHeads>
            {freeColumns.map((name) => (
              <ColumnHead key={name} $active={name === "W"}>
                {name}
              </ColumnHead>
            ))}
            {sizedColumns.map(([name, width]) => (
              <ColumnHead key={name} $width={width}>
                {name}
              </ColumnHead>
            ))}
            <Corner>
              <Svg w={6} h={6}>
                <path d="M0 0v6h6z" fill="#bbb" />
              </Svg>
            </Corner>
          </ColumnHeads>
          <SheetBody>
            <EmptyCells />
            <DashboardSheet />
            <RowHeads>
              {Array.from({ length: 30 }, (_, i) => (
                <RowHead key={i} $tall={i === 0}>
                  {i + 1}
                </RowHead>
              ))}
            </RowHeads>
          </SheetBody>
        </Sheet>
      </Workbook>
      <TabStrip>
        <HScroll>
          <ScrollButton aria-label="Scroll left">
            <Arrow dir="left" />
          </ScrollButton>
          <HEnd>
            <HThumb />
            <ScrollButton aria-label="Scroll right">
              <Arrow dir="right" />
            </ScrollButton>
          </HEnd>
        </HScroll>
        <SheetTabs>
          <Grip>
            <Svg w={2} h={26}>
              <path d="M0 9h2M0 13h2M0 17h2" stroke="#999" strokeWidth="2" />
            </Svg>
          </Grip>
          <AddSheet aria-label="New sheet">
            <Svg w={16} h={16}>
              <circle cx="8" cy="8" r="7" stroke="#777" />
              <path d="M8 4v8M4 8h8" stroke="#666" strokeWidth="1.800" />
            </Svg>
          </AddSheet>
          <SheetTab $width={55} $first>
            HELP
          </SheetTab>
          <SheetTab $width={106} $active>
            DASHBOARD
          </SheetTab>
          <SheetTab $width={109}>APPLICATION</SheetTab>
          <SheetTab $width={84}>SETTINGS</SheetTab>
          <TabArrows>
            <Arrow dir="left" color="#bbb" />
            <Arrow dir="right" color="#bbb" />
          </TabArrows>
        </SheetTabs>
      </TabStrip>
      <StatusBar>
        <Ready>Ready</Ready>
        <ViewButton $active aria-label="Normal view">
          <Svg w={14} h={13}>
            <path d="M.5.5h12v11H.5zM4.500.5v11M8.500.5v11M.5 4h12M.5 8h12" stroke="#666" />
          </Svg>
        </ViewButton>
        <ViewButton aria-label="Page layout view">
          <Svg w={14} h={13}>
            <path d="M.5.5h13v12H.5zM3.500 2.500h7v8h-7zM5 4.500h4M5 6.500h4M5 8.500h4" stroke="#666" />
          </Svg>
        </ViewButton>
        <ViewButton aria-label="Page break preview">
          <Svg w={14} h={13}>
            <path d="M.5.5h13v12H.5zM4.500.5v7h6v-7M7.500.5v7" stroke="#666" />
          </Svg>
        </ViewButton>
        <ZoomButton aria-label="Zoom out">
          <Svg w={8} h={8}>
            <path d="M1 4h6" stroke="#555" strokeWidth="2" />
          </Svg>
        </ZoomButton>
        <ZoomSlider type="range" aria-label="Zoom" defaultValue={35} />
        <ZoomButton aria-label="Zoom in">
          <Svg w={8} h={8}>
            <path d="M0 4h8M4 0v8" stroke="#555" strokeWidth="2" />
          </Svg>
        </ZoomButton>
        <ZoomValue>70%</ZoomValue>
      </StatusBar>
      <Taskbar />
    </Page>
  </>
);

export default App;
